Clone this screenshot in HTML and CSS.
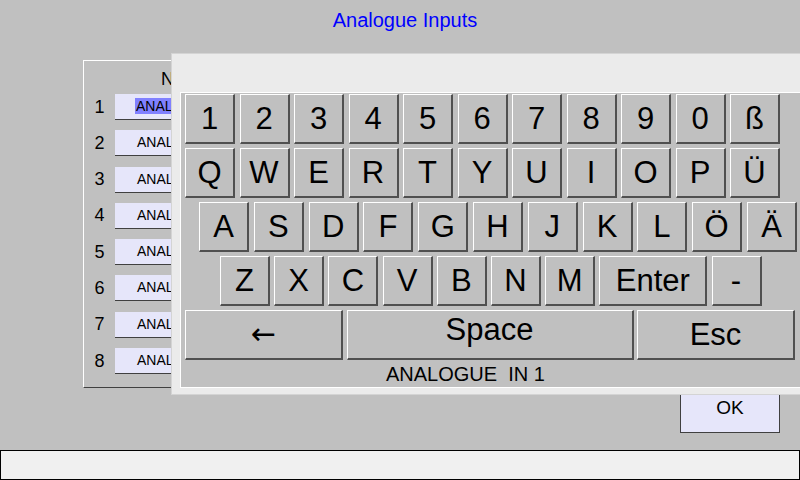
FILE: index.html
```html
<!DOCTYPE html>
<html lang="en">
<head>
    <meta charset="UTF-8">
    <meta name="viewport" content="width=device-width, initial-scale=1.0">
    <title>Analogue Inputs</title>
    <link rel="stylesheet" href="styles.css">
</head>
<body>

    <div class="screen">
        <!-- Title -->
        <div class="title">Analogue Inputs</div>

        <div class="content">
            <!-- Input names -->
            <div class="panel">
                <div class="panel-head">Name</div>
                <div class="rows">
                    <div class="row"><span class="num">1</span><div class="field"><span class="selected">ANALOGUE  IN 1</span></div></div>
                    <div class="row"><span class="num">2</span><div class="field">ANALOGUE  IN 2</div></div>
                    <div class="row"><span class="num">3</span><div class="field">ANALOGUE  IN 3</div></div>
                    <div class="row"><span class="num">4</span><div class="field">ANALOGUE  IN 4</div></div>
                    <div class="row"><span class="num">5</span><div class="field">ANALOGUE  IN 5</div></div>
                    <div class="row"><span class="num">6</span><div class="field">ANALOGUE  IN 6</div></div>
                    <div class="row"><span class="num">7</span><div class="field">ANALOGUE  IN 7</div></div>
                    <div class="row"><span class="num">8</span><div class="field">ANALOGUE  IN 8</div></div>
                </div>
            </div>

            <button class="ok">OK</button>
        </div>

        <!-- Status bar -->
        <div class="status"></div>

        <!-- On-screen keyboard -->
        <div class="keyboard">
            <div class="kb-top"></div>
            <div class="keypad">
                <div class="key-row">
                    <button class="key">1</button>
                    <button class="key">2</button>
                    <button class="key">3</button>
                    <button class="key">4</button>
                    <button class="key">5</button>
                    <button class="key">6</button>
                    <button class="key">7</button>
                    <button class="key">8</button>
                    <button class="key">9</button>
                    <button class="key">0</button>
                    <button class="key">ß</button>
                </div>
                <div class="key-row">
                    <button class="key">Q</button>
                    <button class="key">W</button>
                    <button class="key">E</button>
                    <button class="key">R</button>
                    <button class="key">T</button>
                    <button class="key">Y</button>
                    <button class="key">U</button>
                    <button class="key">I</button>
                    <button class="key">O</button>
                    <button class="key">P</button>
                    <button class="key">Ü</button>
                </div>
                <div class="key-row row-a">
                    <button class="key">A</button>
                    <button class="key">S</button>
                    <button class="key">D</button>
                    <button class="key">F</button>
                    <button class="key">G</button>
                    <button class="key">H</button>
                    <button class="key">J</button>
                    <button class="key">K</button>
                    <button class="key">L</button>
                    <button class="key">Ö</button>
                    <button class="key">Ä</button>
                </div>
                <div class="key-row row-z">
                    <button class="key">Z</button>
                    <button class="key">X</button>
                    <button class="key">C</button>
                    <button class="key">V</button>
                    <button class="key">B</button>
                    <button class="key">N</button>
                    <button class="key">M</button>
                    <button class="key enter">Enter</button>
                    <button class="key">-</button>
                </div>
                <div class="key-row row-bottom">
                    <button class="key wide arrow">&larr;</button>
                    <button class="key space">Space</button>
                    <button class="key wide esc">Esc</button>
                </div>
                <div class="kb-label">ANALOGUE  IN 1</div>
            </div>
        </div>
    </div>

</body>
</html>
```

FILE: styles.css
```css
body {
    margin: 0;
    font-family: "Liberation Sans", Arial, sans-serif;
    background-color: #c0c0c0;
}

.screen {
    position: relative;
    width: 800px;
    height: 480px;
    overflow: hidden;
    display: flex;
    flex-direction: column;
}

.title {
    height: 60px;
    box-sizing: border-box;
    padding: 8px 0 0 10px;
    line-height: 24px;
    font-size: 20px;
    text-align: center;
    color: #0000ff;
}

.content {
    height: 373px;
    display: flex;
    justify-content: space-between;
    padding: 0 20px 0 83px;
}

/* Left panel */
.panel {
    align-self: flex-start;
    width: 330px;
    border: 1px solid;
    border-color: #fff #404040 #404040 #fff;
    padding-bottom: 13px;
}

.panel-head {
    height: 33px;
    box-sizing: border-box;
    padding: 3px 0 0 77px;
    line-height: 30px;
    font-size: 18px;
}

.rows {
    display: flex;
    flex-direction: column;
    gap: 10.3px;
}

.row {
    display: flex;
    align-items: center;
}

.num {
    width: 31px;
    text-align: center;
    font-size: 18px;
}

.field {
    width: 158px;
    height: 26px;
    box-sizing: border-box;
    background-color: #e6e6fa;
    border-bottom: 1px solid #404040;
    padding-left: 22px;
    line-height: 25px;
    font-size: 14px;
    white-space: pre;
}

.selected {
    display: inline-block;
    margin-left: -2px;
    padding-left: 1px;
    line-height: 16px;
    background-color: #8080ff;
}

.ok {
    align-self: flex-end;
    width: 100px;
    height: 50px;
    background-color: #e6e6fa;
    border: 1px solid #404040;
    font-family: inherit;
    font-size: 19px;
    padding: 0;
}

.status {
    margin-top: 17px;
    height: 30px;
    box-sizing: border-box;
    background-color: #f0f0f0;
    border: 1px solid #000;
}

/* Keyboard overlay */
.keyboard {
    position: absolute;
    left: 171px;
    top: 53px;
    width: 660px;
    height: 342px;
    box-sizing: border-box;
    background-color: #ebebeb;
    border: 1px solid #d4d4d4;
}

.kb-top {
    height: 38px;
}

.keypad {
    margin-left: 8px;
    border: 1px solid #fff;
    background-color: #c0c0c0;
    padding: 1px 0 0 4px;
    display: flex;
    flex-direction: column;
    gap: 4px;
}

.key-row {
    display: flex;
    gap: 4.5px;
}

.row-a {
    margin-left: 14px;
    gap: 4.8px;
}

.row-z {
    margin-left: 35px;
    gap: 4.2px;
}

.row-bottom {
    gap: 3.5px;
}

.key {
    width: 50px;
    height: 50px;
    box-sizing: border-box;
    padding: 0;
    background-color: #c0c0c0;
    border-style: solid;
    border-width: 1px 2px 2px 1px;
    border-color: #fff #505050 #505050 #fff;
    font-family: inherit;
    font-size: 31px;
    color: #000;
    line-height: 1;
}

.enter {
    width: 108px;
}

.wide {
    width: 158px;
}

.space {
    width: 287px;
    padding-bottom: 10px;
}

.arrow {
    font-family: "DejaVu Sans", sans-serif;
    font-size: 30px;
    padding-bottom: 2px;
}

.kb-label {
    height: 27px;
    margin-top: -4px;
    padding-left: 201px;
    line-height: 28px;
    font-size: 20px;
    white-space: pre;
}
```
